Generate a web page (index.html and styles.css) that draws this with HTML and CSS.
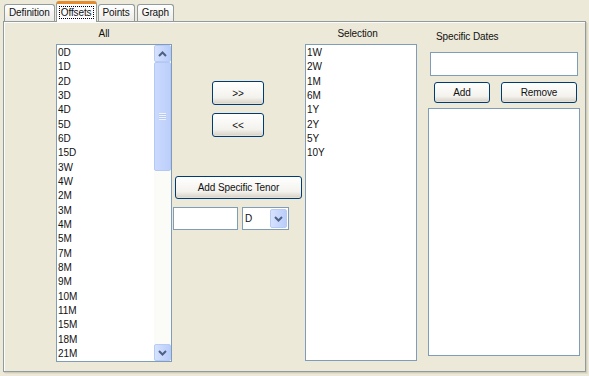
FILE: index.html
```html
<!DOCTYPE html>
<html lang="en">
<head>
    <meta charset="UTF-8">
    <title>Offsets</title>
    <link rel="stylesheet" href="styles.css">
</head>
<body>

<!-- Tabs -->
<div class="tabs">
    <div class="tab">Definition</div>
    <div class="tab active"><span class="focus">Offsets</span></div>
    <div class="tab">Points</div>
    <div class="tab">Graph</div>
</div>

<div class="panel">

    <!-- All tenors -->
    <div class="col col-all">
        <div class="caption">All</div>
        <div class="list list-all">
            <div class="items">
                <div>0D</div><div>1D</div><div>2D</div><div>3D</div><div>4D</div>
                <div>5D</div><div>6D</div><div>15D</div><div>3W</div><div>4W</div>
                <div>2M</div><div>3M</div><div>4M</div><div>5M</div><div>7M</div>
                <div>8M</div><div>9M</div><div>10M</div><div>11M</div><div>15M</div>
                <div>18M</div><div>21M</div>
            </div>
            <div class="scrollbar">
                <div class="sb-btn">
                    <svg width="9" height="6" viewBox="0 0 9 6"><path d="M1 5 L4.5 1.5 L8 5" fill="none" stroke="#4d6185" stroke-width="2"/></svg>
                </div>
                <div class="sb-thumb"><span class="grip"></span></div>
                <div class="sb-track"></div>
                <div class="sb-btn">
                    <svg width="9" height="6" viewBox="0 0 9 6"><path d="M1 1 L4.5 4.5 L8 1" fill="none" stroke="#4d6185" stroke-width="2"/></svg>
                </div>
            </div>
        </div>
    </div>

    <!-- Move buttons -->
    <div class="col col-actions">
        <button class="btn btn-move">&gt;&gt;</button>
        <button class="btn btn-move">&lt;&lt;</button>
        <button class="btn btn-tenor">Add Specific Tenor</button>
        <div class="tenor-row">
            <div class="field field-tenor"></div>
            <div class="combo">
                <span class="combo-value">D</span>
                <span class="combo-btn">
                    <svg width="9" height="6" viewBox="0 0 9 6"><path d="M1 1 L4.5 4.5 L8 1" fill="none" stroke="#4d6185" stroke-width="2"/></svg>
                </span>
            </div>
        </div>
    </div>

    <!-- Selection -->
    <div class="col col-sel">
        <div class="caption">Selection</div>
        <div class="list list-sel">
            <div class="items">
                <div>1W</div><div>2W</div><div>1M</div><div>6M</div>
                <div>1Y</div><div>2Y</div><div>5Y</div><div>10Y</div>
            </div>
        </div>
    </div>

    <!-- Specific dates -->
    <div class="col col-dates">
        <div class="caption caption-left">Specific Dates</div>
        <div class="field field-date"></div>
        <div class="date-buttons">
            <button class="btn btn-add">Add</button>
            <button class="btn btn-remove">Remove</button>
        </div>
        <div class="list list-dates"></div>
    </div>

</div>

</body>
</html>
```

FILE: styles.css
```css
:root {
    --xp-bg: #ece9d8;
    --xp-border: #919b9c;
    --list-border: #7f9db9;
    --btn-border: #003c74;
}

body {
    margin: 0;
    background-color: var(--xp-bg);
    font-family: 'Liberation Sans', Arial, sans-serif;
    font-size: 10px;
    letter-spacing: -0.1px;
    color: #111;
    width: 589px;
    height: 376px;
    overflow: hidden;
}

/* Tabs */
.tabs {
    display: flex;
    align-items: flex-end;
    height: 21px;
    padding-left: 4px;
}

.tab {
    height: 16px;
    line-height: 16px;
    padding: 0 4px;
    margin-right: 2px;
    border: 1px solid var(--xp-border);
    border-bottom: none;
    border-radius: 3px 3px 0 0;
    background: linear-gradient(#ffffff, #ecebe6);
}

.tab.active {
    position: relative;
    z-index: 1;
    height: 18px;
    line-height: 17px;
    margin: 0 1px -1px -1px;
    padding: 0 3px;
    border-top: 3px solid #e68b2c;
    background: #fcfcfe;
}

.focus {
    outline: 1px dotted #000;
    padding: 0 1px;
}

/* Panel */
.panel {
    display: flex;
    height: 349px;
    margin: 0 3px 0 3px;
    border: 1px solid var(--xp-border);
    box-shadow: inset 1px 1px 0 #fcfcfe, 1px 1px 0 #d0cdbd, 2px 2px 0 #e0ddcc;
}

.col {
    display: flex;
    flex-direction: column;
}

.caption {
    height: 14px;
    line-height: 14px;
    text-align: center;
}

.caption-left {
    text-align: left;
    padding-left: 8px;
}

.list {
    background: #fff;
    border: 1px solid var(--list-border);
    display: flex;
}

.items {
    flex: 1;
    padding: 1px 0 0 1px;
}

.items div {
    height: 14.33px;
    line-height: 14.33px;
}

/* Columns */
.col-all {
    margin-left: 52px;
    width: 116px;
    padding-top: 5px;
}

.col-all .caption {
    margin-bottom: 3px;
    padding-right: 20px;
}

.list-all {
    height: 316px;
}

.scrollbar {
    width: 17px;
    display: flex;
    flex-direction: column;
    background: #fbfbf8;
}

.sb-btn {
    height: 15px;
    border: 1px solid #b7cbf5;
    border-radius: 2px;
    background: linear-gradient(90deg, #d6e2fd, #b9cdfb);
    display: flex;
    align-items: center;
    justify-content: center;
}

.sb-thumb {
    height: 107px;
    border: 1px solid #b3c8f6;
    border-radius: 2px;
    background: linear-gradient(90deg, #cbd9fd, #bccffb);
    display: flex;
    align-items: center;
    justify-content: center;
}

.grip {
    width: 7px;
    height: 7px;
    background: repeating-linear-gradient(#eef3fe 0 1px, #b3c8f6 1px 2px);
}

.sb-track {
    flex: 1;
}

.col-actions {
    margin-left: 1px;
    width: 129px;
    padding-top: 59px;
}

.btn {
    font-family: inherit;
    font-size: 10px;
    letter-spacing: -0.1px;
    color: #111;
    margin: 0;
    padding: 0;
    border: 1px solid var(--btn-border);
    border-radius: 3px;
    background: linear-gradient(#ffffff, #f3f2ed 70%, #d6d0c5);
    box-shadow: inset 0 -1px 0 #e3e1d8;
}

.btn-move {
    align-self: center;
    width: 52px;
    height: 24px;
    margin-left: 1px;
    margin-bottom: 8px;
}

.btn-tenor {
    width: 127px;
    height: 23px;
    margin-left: 2px;
    margin-top: 31px;
}

.tenor-row {
    display: flex;
    gap: 4px;
    margin-top: 8px;
}

.field {
    background: #fff;
    border: 1px solid var(--list-border);
    box-sizing: border-box;
}

.field-tenor {
    width: 65px;
    height: 23px;
}

.combo {
    width: 47px;
    height: 23px;
    box-sizing: border-box;
    background: #fff;
    border: 1px solid var(--list-border);
    display: flex;
    padding: 1px;
}

.combo-value {
    flex: 1;
    line-height: 19px;
    padding-left: 1px;
}

.combo-btn {
    width: 15px;
    border: 1px solid #b7cbf5;
    border-radius: 2px;
    background: linear-gradient(90deg, #d6e2fd, #b9cdfb);
    display: flex;
    align-items: center;
    justify-content: center;
}

.col-sel {
    margin-left: 3px;
    width: 112px;
    padding-top: 5px;
}

.col-sel .caption {
    margin-bottom: 3px;
    padding-right: 7px;
}

.list-sel {
    height: 315px;
}

.col-dates {
    margin-left: 11px;
    width: 152px;
    padding-top: 8px;
}

.field-date {
    width: 148px;
    height: 24px;
    margin: 8px 0 0 2px;
}

.date-buttons {
    display: flex;
    gap: 11px;
    margin: 6px 0 0 6px;
}

.btn-add {
    width: 56px;
    height: 21px;
}

.btn-remove {
    width: 76px;
    height: 21px;
}

.list-dates {
    height: 246px;
    margin-top: 5px;
}
```
